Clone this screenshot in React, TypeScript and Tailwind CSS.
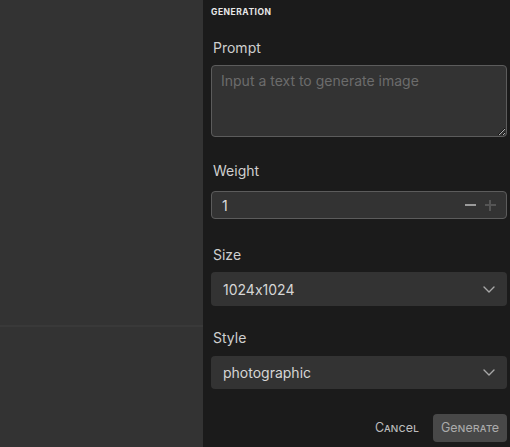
import { useState } from "react";

function Chevron() {
  return (
    <svg width="12" height="7" viewBox="0 0 12 7" fill="none" className="text-[#a8a8a8]">
      <path d="M1 1l5 5 5-5" stroke="currentColor" strokeWidth="1.4" strokeLinecap="round" strokeLinejoin="round" />
    </svg>
  );
}

function SelectBox({ value, className }: { value: string; className: string }) {
  return (
    <div className={`flex items-center justify-between rounded-[4px] bg-[#333333] pl-[12px] pr-[12px] ${className}`}>
      <span className="text-[14px] text-[#d6d6d6] [font-feature-settings:'calt'_0]">{value}</span>
      <Chevron />
    </div>
  );
}

export default function App() {
  const [prompt, setPrompt] = useState("");
  const [weight, setWeight] = useState(1);

  return (
    <div className="flex h-[447px] w-[510px] overflow-hidden font-['Inter','Noto_Sans',sans-serif]">
      {/* Left canvas area */}
      <div className="flex w-[203px] shrink-0 flex-col bg-[#333333]">
        <div className="h-[327px] shrink-0 border-b-2 border-[#393939]" />
        <div className="flex-1" />
      </div>

      {/* Generation panel */}
      <div className="flex flex-1 flex-col bg-[#1b1b1b] pl-[8px] pr-[3px]">
        <div className="flex h-[24px] items-center">
          <span className="text-[8.5px] font-bold uppercase tracking-[0.06em] text-[#e8e8e8]">Generation</span>
        </div>

        <label className="ml-[2px] mt-[14px] text-[14px] leading-[20px] text-[#cfcfcf]">Prompt</label>
        <textarea
          value={prompt}
          onChange={(e) => setPrompt(e.target.value)}
          placeholder="Input a text to generate image"
          className="mt-[7px] h-[72px] w-full rounded-[4px] border border-[#5c5c5c] bg-[#333333] px-[9px] py-[5px] text-[14px] leading-[20px] text-[#d6d6d6] outline-none placeholder:text-[#6c6c6c]"
        />

        <label className="ml-[2px] mt-[24px] text-[14px] leading-[20px] text-[#cfcfcf]">Weight</label>
        <div className="mt-[10px] flex h-[28px] items-center justify-between rounded-[4px] border border-[#5c5c5c] bg-[#333333] pl-[10px] pr-[10px]">
          <span className="text-[14px] text-[#dcdcdc]">{weight}</span>
          <div className="flex items-center gap-[8px]">
            <button onClick={() => setWeight(Math.max(0, weight - 1))} className="flex h-[12px] w-[12px] items-center justify-center">
              <span className="block h-[2px] w-[11px] bg-[#9a9a9a]" />
            </button>
            <button onClick={() => setWeight(weight + 1)} className="relative flex h-[12px] w-[12px] items-center justify-center">
              <span className="absolute block h-[1.5px] w-[11px] bg-[#555555]" />
              <span className="absolute block h-[11px] w-[1.5px] bg-[#555555]" />
            </button>
          </div>
        </div>

        <label className="ml-[2px] mt-[26px] text-[14px] leading-[20px] text-[#cfcfcf]">Size</label>
        <SelectBox value="1024x1024" className="mt-[7px] h-[34px]" />

        <label className="ml-[2px] mt-[22px] text-[14px] leading-[20px] text-[#cfcfcf]">Style</label>
        <SelectBox value="photographic" className="mt-[8px] h-[33px]" />

        <div className="mt-[25px] flex items-center justify-end gap-[14px]">
          <button className="text-[12.5px] text-[#bdbdbd] [font-variant:small-caps]">Cancel</button>
          <button className="h-[28px] w-[74px] rounded-[4px] bg-[#484848] text-[12.5px] text-[#ababab] [font-variant:small-caps]">
            Generate
          </button>
        </div>
      </div>
    </div>
  );
}
